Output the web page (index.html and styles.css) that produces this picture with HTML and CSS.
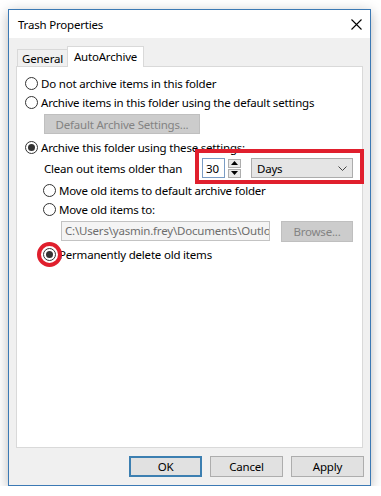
FILE: index.html
```html
<!DOCTYPE html>
<html lang="en">
<head>
  <meta charset="UTF-8" />
  <title>Trash Properties</title>
  <link rel="stylesheet" href="styles.css">
</head>
<body>
  <div class="dialog">
    <div class="titlebar">
      <span class="title">Trash Properties</span>
      <svg class="close" width="11" height="11" viewBox="0 0 11 11">
        <path d="M0.5 0.5 L10.5 10.5 M10.5 0.5 L0.5 10.5" stroke="#000" stroke-width="1.1" fill="none" />
      </svg>
    </div>
    <div class="body">
      <div class="tabs">
        <div class="tab">General</div>
        <div class="tab active">AutoArchive</div>
      </div>
      <div class="panel">
        <div class="opt"><span class="radio"></span>Do not archive items in this folder</div>
        <div class="opt"><span class="radio"></span>Archive items in this folder using the default settings</div>
        <div class="btn disabled defaults">Default Archive Settings...</div>
        <div class="opt r3"><span class="radio checked"></span>Archive this folder using these settings:</div>
        <div class="clean-row">
          <span class="clean-label">Clean out items older than</span>
          <div class="controls">
            <div class="spin-value">30</div>
            <div class="spin-btns">
              <div class="spin-btn">
                <svg width="7" height="4" viewBox="0 0 7 4"><path d="M0 4 L3.5 0 L7 4 Z" fill="#000" /></svg>
              </div>
              <div class="spin-btn">
                <svg width="7" height="4" viewBox="0 0 7 4"><path d="M0 0 L3.5 4 L7 0 Z" fill="#000" /></svg>
              </div>
            </div>
            <div class="select">
              <span>Days</span>
              <svg width="9" height="5" viewBox="0 0 9 5"><path d="M0.5 0.5 L4.5 4.5 L8.5 0.5" stroke="#444" stroke-width="1" fill="none" /></svg>
            </div>
          </div>
        </div>
        <div class="opt sub r-move"><span class="radio"></span>Move old items to default archive folder</div>
        <div class="opt sub"><span class="radio"></span>Move old items to:</div>
        <div class="path-row">
          <div class="path"><span>C:\Users\yasmin.frey\Documents\Outlo</span></div>
          <div class="btn disabled browse">Browse...</div>
        </div>
        <div class="opt sub r-perm"><span class="radio checked ringed"></span>Permanently delete old items</div>
      </div>
      <div class="buttons">
        <div class="btn default">OK</div>
        <div class="btn">Cancel</div>
        <div class="btn">Apply</div>
      </div>
    </div>
  </div>
</body>
</html>
```

FILE: styles.css
```css
*, *::before, *::after { box-sizing: border-box; }
html, body {
  margin: 0;
  padding: 0;
  background: #ffffff;
}
body {
  padding: 9px 0 0 8px;
  font-family: "Noto Sans", "DejaVu Sans", sans-serif;
  font-size: 11.5px;
  letter-spacing: -0.2px;
  color: #000;
}
.dialog {
  width: 363px;
  height: 477px;
  border: 1px solid #3b79b4;
  box-shadow: 0 3px 12px rgba(0, 0, 0, 0.28);
  display: flex;
  flex-direction: column;
  background: #f0f0f0;
}
.titlebar {
  height: 28px;
  background: #fff;
  display: flex;
  align-items: center;
  justify-content: space-between;
  padding: 0 8px 0 9px;
}
.title { font-size: 11.5px; }
.close { display: block; }
.body {
  flex: 1;
  display: flex;
  flex-direction: column;
  padding: 8px 6px 8px 7px;
}
.tabs {
  height: 20px;
  display: flex;
  align-items: flex-end;
  padding-left: 1px;
}
.tab {
  height: 17px;
  width: 51px;
  border: 1px solid #d9d9d9;
  border-bottom: none;
  background: #f0f0f0;
  display: flex;
  align-items: center;
  justify-content: center;
  padding-top: 1px;
}
.tab.active {
  height: 21px;
  width: 77px;
  margin-left: -1px;
  margin-bottom: -1px;
  background: #fff;
  position: relative;
  z-index: 1;
  padding-top: 0;
  padding-bottom: 2px;
}
.panel {
  flex: 1;
  margin-right: 1px;
  background: #fff;
  border: 1px solid #d9d9d9;
  padding: 7px 0 0 8px;
}
.opt {
  height: 19px;
  display: flex;
  align-items: center;
  white-space: nowrap;
}
.radio {
  width: 13px;
  height: 13px;
  border: 1px solid #333;
  border-radius: 50%;
  background: #fff;
  margin-right: 3px;
  flex: none;
  position: relative;
}
.radio.checked::before {
  content: "";
  position: absolute;
  left: 2px;
  top: 2px;
  width: 7px;
  height: 7px;
  border-radius: 50%;
  background: #333;
}
.radio.ringed::after {
  content: "";
  position: absolute;
  left: -7px;
  top: -7px;
  width: 25px;
  height: 25px;
  border: 4px solid #e01f2d;
  border-radius: 50%;
}
.sub { margin-left: 18px; }
.r3 { margin-top: 4px; }
.r-move { margin-top: 3px; }
.r-perm { margin-top: 3px; }
.btn {
  height: 21px;
  width: 73px;
  background: #e1e1e1;
  border: 1px solid #adadad;
  display: flex;
  align-items: center;
  justify-content: center;
}
.btn.disabled {
  background: #cccccc;
  border-color: #bfbfbf;
  color: #838383;
}
.defaults {
  width: 156px;
  height: 20px;
  margin: 2px 0 0 19px;
}
.clean-row {
  height: 20px;
  margin-top: 1px;
  margin-left: 19px;
  display: flex;
  align-items: center;
}
.clean-label {
  width: 158px;
  white-space: nowrap;
}
.controls {
  display: flex;
  align-items: center;
  height: 20px;
  position: relative;
}
.controls::after {
  content: "";
  position: absolute;
  left: -7px;
  top: -9px;
  right: -11px;
  bottom: -6px;
  border: 4px solid #e01f2d;
}
.spin-value {
  width: 23px;
  height: 20px;
  border: 1px solid #7a9cc4;
  display: flex;
  align-items: center;
  padding-left: 3px;
}
.spin-btns {
  margin-left: 3px;
  display: flex;
  flex-direction: column;
  gap: 1px;
}
.spin-btn {
  width: 13px;
  height: 9px;
  border: 1px solid #adadad;
  background: #e9e9e9;
  display: flex;
  align-items: center;
  justify-content: center;
}
.spin-btn svg { display: block; }
.select {
  margin-left: 10px;
  width: 102px;
  height: 20px;
  background: #e5e5e5;
  border: 1px solid #acacac;
  display: flex;
  align-items: center;
  justify-content: space-between;
  padding: 0 5px 0 5px;
}
.select svg { display: block; }
.path-row {
  margin: 2px 0 0 36px;
  display: flex;
  align-items: flex-start;
}
.path {
  width: 209px;
  height: 20px;
  border: 1px solid #c3c3c3;
  background: #f4f4f4;
  color: #6d6d6d;
  white-space: nowrap;
  overflow: hidden;
  padding-left: 3px;
  line-height: 18px;
}
.browse {
  margin-left: 11px;
  width: 72px;
  border-color: #cccccc;
}
.buttons {
  margin-top: 8px;
  display: flex;
  justify-content: flex-end;
  gap: 8px;
}
.btn.default {
  border: 2px solid #3c7fb1;
}
```
